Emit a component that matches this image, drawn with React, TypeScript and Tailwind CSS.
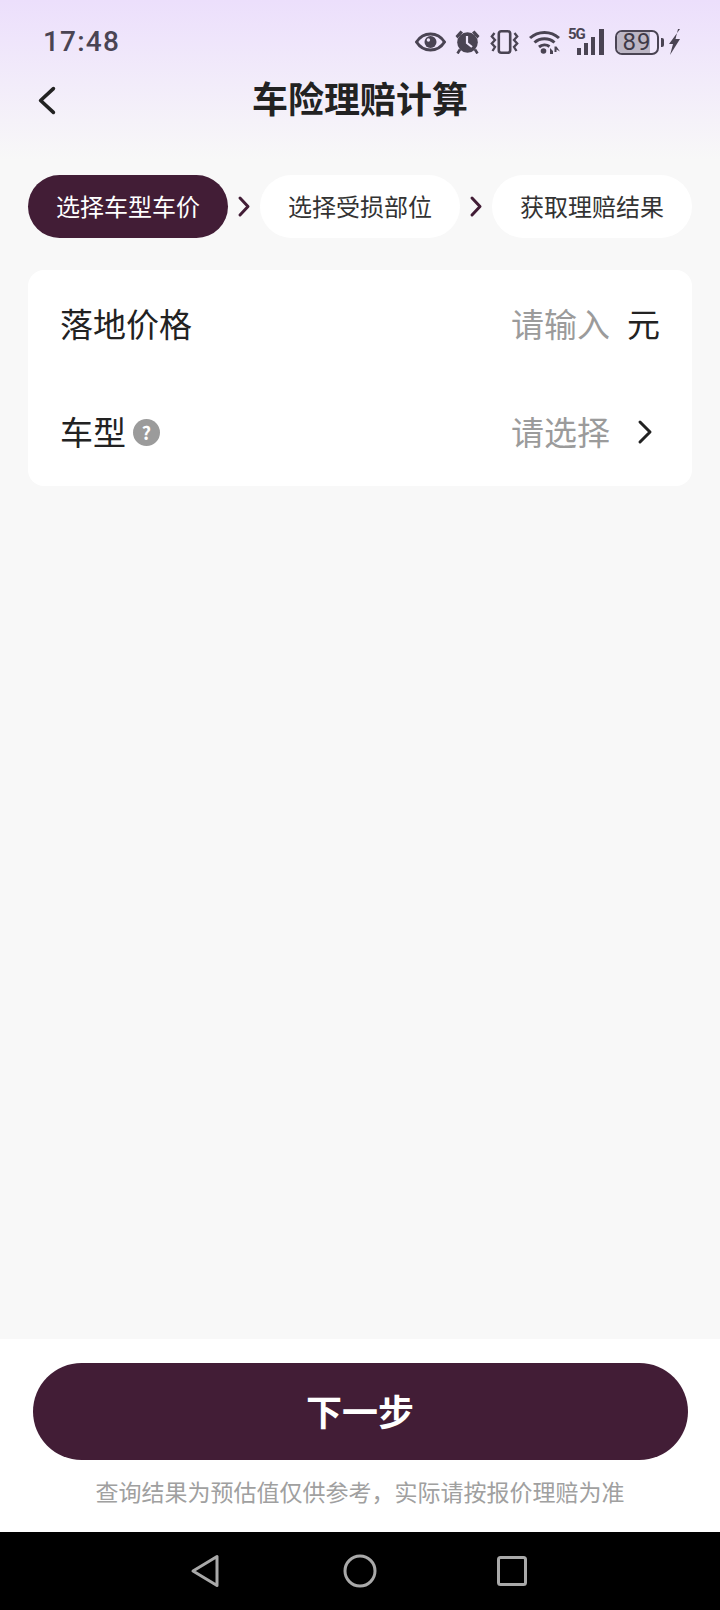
const cjk = "font-['Noto_Sans_CJK_SC','Noto_Sans',sans-serif]";

const steps = ["选择车型车价", "选择受损部位", "获取理赔结果"];

const Arrow = ({ w, h, sw, flip, className }: { w: number; h: number; sw: number; flip?: boolean; className?: string }) => (
  <svg width={w} height={h} viewBox={`0 0 ${w} ${h}`} className={className}>
    <polyline
      points={flip ? `${w - sw},${sw} ${sw},${h / 2} ${w - sw},${h - sw}` : `${sw},${sw} ${w - sw},${h / 2} ${sw},${h - sw}`}
      fill="none"
      stroke="currentColor"
      strokeWidth={sw}
      strokeLinecap="round"
      strokeLinejoin="round"
    />
  </svg>
);

const StatusIcons = () => (
  <div className="flex items-center text-[#4a4453]">
    {/* eye */}
    <svg width="31" height="20" viewBox="0 0 31 20">
      <path d="M1.5 10C5 4.5 10 2 15.5 2S26 4.5 29.5 10C26 15.5 21 18 15.5 18S5 15.5 1.5 10Z" fill="none" stroke="currentColor" strokeWidth="3" />
      <circle cx="15.5" cy="10" r="6" fill="currentColor" />
      <circle cx="13.4" cy="8" r="1.7" fill="#efe6fb" />
    </svg>
    {/* alarm */}
    <svg width="25" height="24" viewBox="0 0 25 24" className="ml-[9px]">
      <path d="M0.5 6L5.5 0.5L8 2.5L2.5 8.5Z M24.5 6L19.5 0.5L17 2.5L22.5 8.5Z" fill="currentColor" />
      <circle cx="12.5" cy="12.5" r="10.3" fill="currentColor" />
      <path d="M5 19.5L2.5 23.5 M20 19.5L22.5 23.5" stroke="currentColor" strokeWidth="2.6" />
      <path d="M12 6V13L17 17" fill="none" stroke="#efe6fb" strokeWidth="2.2" />
    </svg>
    {/* vibrate */}
    <svg width="29" height="24" viewBox="0 0 29 24" className="ml-[10px]">
      <rect x="8.8" y="1.3" width="11.4" height="21.4" rx="2.5" fill="none" stroke="currentColor" strokeWidth="2.6" />
      <path d="M4.5 3L1.8 6.5L5 10L1.8 13.5L5 17L2.5 21 M24.5 3L27.2 6.5L24 10L27.2 13.5L24 17L26.5 21" fill="none" stroke="currentColor" strokeWidth="2.3" />
    </svg>
    {/* wifi */}
    <svg width="31" height="24" viewBox="0 0 31 24" className="ml-[10px]">
      <path d="M1 8C9 0.5 22 0.5 30 8" fill="none" stroke="currentColor" strokeWidth="3" />
      <path d="M5.5 12.5C11 7.5 20 7.5 25.5 12.5" fill="none" stroke="currentColor" strokeWidth="3" />
      <path d="M10 17C13 14.5 17.5 14.5 20.5 16.5" fill="none" stroke="currentColor" strokeWidth="3" />
      <circle cx="14.5" cy="21" r="2.8" fill="currentColor" />
      <path d="M21 24V18L24 21V24Z M25.5 16.5V22H27.5V19.5L31 21.5L27.5 16.5Z" fill="currentColor" />
    </svg>
    {/* 5G signal */}
    <div className="relative ml-[8px] h-[26px] w-[36px]">
      <span className="absolute left-0 top-[-3px] font-['Roboto',sans-serif] text-[15px] font-bold leading-[16px] tracking-[-1px]">5G</span>
      <svg width="36" height="26" viewBox="0 0 36 26" className="absolute inset-0">
        <rect x="9" y="19" width="4" height="7" fill="currentColor" />
        <rect x="16" y="14" width="4" height="12" fill="currentColor" />
        <rect x="23" y="8" width="4" height="18" fill="currentColor" />
        <rect x="31" y="0" width="5" height="26" fill="currentColor" />
      </svg>
    </div>
    {/* battery */}
    <div className="relative ml-[11px] flex h-[25px] w-[44px] items-center justify-center overflow-hidden rounded-[7px] border-[2.5px] border-[#4a4453]">
      <div className="absolute inset-y-0 left-0 w-[33px] bg-[#bcb6c4]" />
      <span className="relative font-['Roboto',sans-serif] text-[24px] leading-none tracking-[1px] text-[#3f3a47]">89</span>
    </div>
    <div className="ml-[2px] h-[9px] w-[3px] rounded-r-[2px] bg-[#4a4453]" />
    {/* charging bolt */}
    <svg width="11" height="26" viewBox="0 0 11 26" className="ml-[5px]">
      <path d="M11 0L0 15H4L1 26L11 10H6.5L9 0Z" fill="currentColor" />
    </svg>
  </div>
);

const App = () => {
  return (
    <div className={`flex h-[1610px] w-[720px] flex-col overflow-hidden bg-[#f8f8f8] ${cjk}`}>
      {/* top tinted area */}
      <div className="bg-gradient-to-b from-[#ecdffc] to-[#f8f8f8] h-[160px] shrink-0">
        <div className="flex h-[84px] items-center justify-between pl-[43px] pr-[40px]">
          <span className="font-['Roboto',sans-serif] text-[28px] font-medium tracking-[1.2px] text-[#4a4453]">17:48</span>
          <StatusIcons />
        </div>
        <div className="relative flex h-[32px] items-center justify-center">
          <Arrow w={20} h={31} sw={3.6} flip className="absolute left-[37px] top-[1px] text-[#222222]" />
          <h1 className="pb-[6px] text-[36px] font-bold leading-none text-[#222222]">车险理赔计算</h1>
        </div>
      </div>

      {/* steps */}
      <div className="mt-[15px] flex items-center justify-between px-[28px]">
        {steps.map((step, index) => (
          <div key={step} className="flex items-center">
            {index > 0 && (
              <Arrow w={14} h={23} sw={3} className="mx-[9px] text-[#421d36]" />
            )}
            <div
              className={`flex h-[63px] w-[200px] items-center justify-center rounded-full pb-[2px] text-[24px] ${
                index === 0 ? "bg-[#421d36] text-white" : "bg-white text-[#333333]"
              }`}
            >
              {step}
            </div>
          </div>
        ))}
      </div>

      {/* form card */}
      <div className="mx-[28px] mt-[32px] h-[216px] rounded-[16px] bg-white px-[32px] text-[33px] text-[#222222]">
        <div className="flex h-[108px] items-center justify-between">
          <span>落地价格</span>
          <div className="flex items-center">
            <span className="text-[#9b9b9b]">请输入</span>
            <span className="ml-[17px]">元</span>
          </div>
        </div>
        <div className="flex h-[108px] items-center justify-between">
          <div className="flex items-center">
            <span>车型</span>
            <span className="ml-[7px] flex h-[27px] w-[27px] items-center justify-center rounded-full bg-[#9b9b9b] text-[18px] font-bold leading-none text-white">?</span>
          </div>
          <div className="flex items-center">
            <span className="text-[#9b9b9b]">请选择</span>
            <Arrow w={16} h={26} sw={3} className="ml-[27px] mr-[7px] text-[#222222]" />
          </div>
        </div>
      </div>

      <div className="flex-1" />

      {/* bottom action */}
      <div className="flex h-[193px] shrink-0 flex-col items-center bg-white pt-[24px]">
        <button className="flex h-[97px] w-[655px] items-center justify-center rounded-full bg-[#421d36] pb-[3px] text-[36px] font-bold text-white">
          下一步
        </button>
        <p className="mt-[15px] text-[23px] leading-[32px] text-[#a0a0a0]">查询结果为预估值仅供参考，实际请按报价理赔为准</p>
      </div>

      {/* android nav bar */}
      <div className="flex h-[78px] shrink-0 items-center justify-center bg-black pr-[3px]">
        <svg width="30" height="34" viewBox="0 0 30 34">
          <path d="M27 2.5V31.5L3 17Z" fill="none" stroke="#a9a9a9" strokeWidth="3" strokeLinejoin="round" />
        </svg>
        <svg width="34" height="34" viewBox="0 0 34 34" className="ml-[123px]">
          <circle cx="17" cy="17" r="15" fill="none" stroke="#a9a9a9" strokeWidth="3" />
        </svg>
        <svg width="30" height="30" viewBox="0 0 30 30" className="ml-[120px]">
          <rect x="1.5" y="1.5" width="27" height="27" rx="2" fill="none" stroke="#a9a9a9" strokeWidth="3" />
        </svg>
      </div>
    </div>
  );
};

export default App;
